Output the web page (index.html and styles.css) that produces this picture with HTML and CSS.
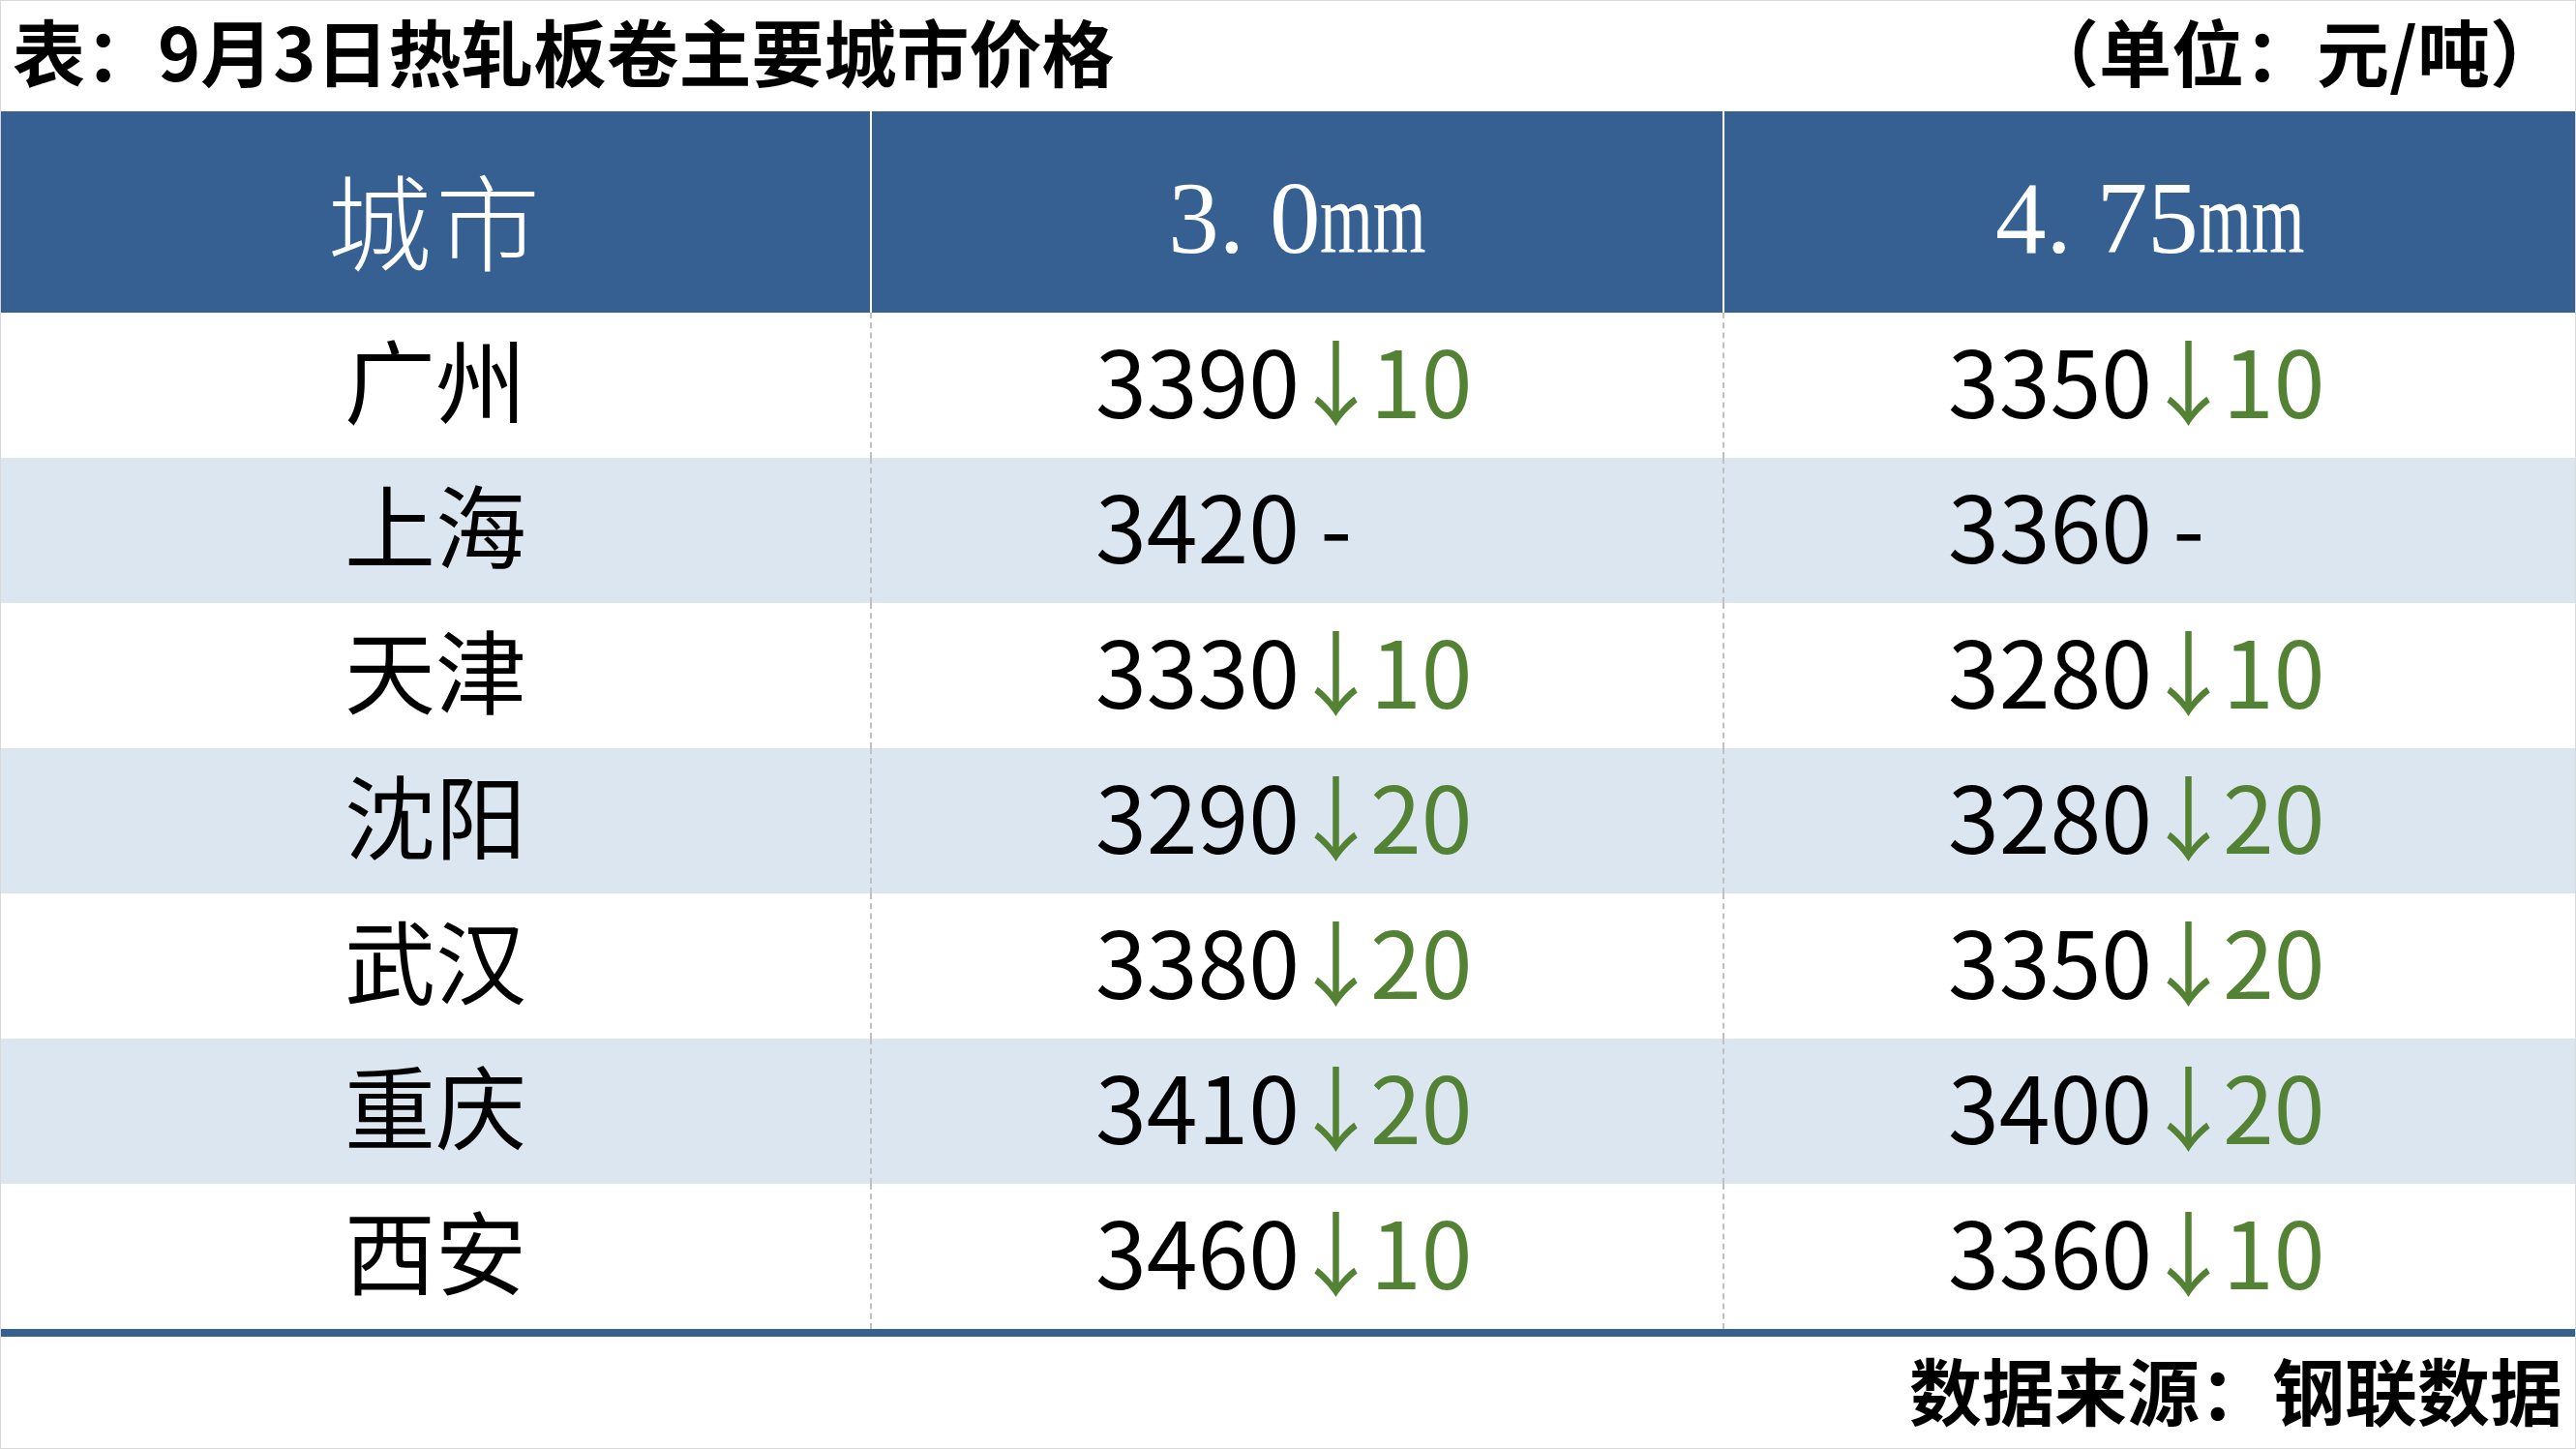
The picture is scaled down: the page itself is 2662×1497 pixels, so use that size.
FILE: index.html
```html
<!DOCTYPE html>
<html lang="zh-CN">
<head>
<meta charset="utf-8">
<title>9月3日热轧板卷主要城市价格</title>
<link rel="stylesheet" href="styles.css">
</head>
<body>
<div class="page">
  <div class="topbar">
    <div class="title">表：9月3日热轧板卷主要城市价格</div>
    <div class="unit">（单位：元/吨）</div>
  </div>
  <div class="table">
    <div class="row head">
      <div class="cell c1"><span class="hcity">城市</span></div>
      <div class="cell c2"><span class="hsize">3<span class="dot">.</span>0<span class="mm">mm</span></span></div>
      <div class="cell c3"><span class="hsize">4<span class="dot">.</span>75<span class="mm">mm</span></span></div>
    </div>
    <div class="row">
      <div class="cell c1 city">广州</div>
      <div class="cell c2 num">3390<span class="arrow">↓</span><span class="chg">10</span></div>
      <div class="cell c3 num">3350<span class="arrow">↓</span><span class="chg">10</span></div>
    </div>
    <div class="row alt">
      <div class="cell c1 city">上海</div>
      <div class="cell c2 num">3420 -</div>
      <div class="cell c3 num">3360 -</div>
    </div>
    <div class="row">
      <div class="cell c1 city">天津</div>
      <div class="cell c2 num">3330<span class="arrow">↓</span><span class="chg">10</span></div>
      <div class="cell c3 num">3280<span class="arrow">↓</span><span class="chg">10</span></div>
    </div>
    <div class="row alt">
      <div class="cell c1 city">沈阳</div>
      <div class="cell c2 num">3290<span class="arrow">↓</span><span class="chg">20</span></div>
      <div class="cell c3 num">3280<span class="arrow">↓</span><span class="chg">20</span></div>
    </div>
    <div class="row">
      <div class="cell c1 city">武汉</div>
      <div class="cell c2 num">3380<span class="arrow">↓</span><span class="chg">20</span></div>
      <div class="cell c3 num">3350<span class="arrow">↓</span><span class="chg">20</span></div>
    </div>
    <div class="row alt">
      <div class="cell c1 city">重庆</div>
      <div class="cell c2 num">3410<span class="arrow">↓</span><span class="chg">20</span></div>
      <div class="cell c3 num">3400<span class="arrow">↓</span><span class="chg">20</span></div>
    </div>
    <div class="row last">
      <div class="cell c1 city">西安</div>
      <div class="cell c2 num">3460<span class="arrow">↓</span><span class="chg">10</span></div>
      <div class="cell c3 num">3360<span class="arrow">↓</span><span class="chg">10</span></div>
    </div>
  </div>
  <div class="footer">数据来源：钢联数据</div>
</div>
</body>
</html>
```
FILE: styles.css
```css
html, body {
  margin: 0;
  padding: 0;
  background: #ffffff;
}

.page {
  width: 2662px;
  height: 1497px;
  box-sizing: border-box;
  border: 1px solid #d9d9d9;
  display: flex;
  flex-direction: column;
  font-family: "Noto Sans CJK SC", "Noto Sans", sans-serif;
  color: #000;
  overflow: hidden;
}

.topbar {
  height: 114px;
  box-sizing: border-box;
  display: flex;
  align-items: center;
  justify-content: space-between;
  padding: 0 13px 12px 12px;
  font-size: 75px;
  font-weight: 700;
  line-height: 1.3;
}

.title, .unit {
  white-space: nowrap;
}

.unit {
  padding-left: 12px;
}

.table {
  display: flex;
  flex-direction: column;
}

.row {
  display: grid;
  grid-template-columns: 898px 881px 881px;
  height: 150px;
  background: #ffffff;
}

.row.alt {
  background: #dce6f1;
}

.row.head {
  height: 208px;
  background: #376092;
  color: #ffffff;
}

.row.last {
  height: 150px;
  border-bottom: 8px solid #376092;
}

.cell {
  box-sizing: border-box;
  display: flex;
  align-items: center;
  white-space: nowrap;
  padding-bottom: 14px;
}

.c2, .c3 {
  border-left: 2px dashed #c0c0c0;
}

.head .cell {
  justify-content: center;
  padding-top: 14px;
  padding-bottom: 0;
}

.head .c2, .head .c3 {
  border-left: 2px solid #ffffff;
}

.hcity {
  font-family: "Noto Sans CJK SC", sans-serif;
  font-weight: 300;
  font-size: 108px;
  line-height: 1.2;
  letter-spacing: 4px;
}

.hsize {
  font-family: "Liberation Serif", serif;
  font-size: 105px;
  line-height: 1.2;
}

.dot {
  margin-right: 26px;
}

.mm {
  display: inline-block;
  transform: scaleX(0.67);
  transform-origin: left center;
  margin-right: -54px;
}

.city {
  justify-content: center;
  font-size: 94px;
  line-height: 1.1;
}

.num {
  font-size: 95px;
  line-height: 1.1;
  padding-left: 231px;
}

.arrow {
  font-family: "Noto Sans CJK SC", sans-serif;
  color: #548235;
  font-size: 95px;
  margin: 0 -12px 0 -10px;
}

.chg {
  color: #548235;
}

.footer {
  flex: 1;
  display: flex;
  align-items: center;
  justify-content: flex-end;
  padding-right: 13px;
  padding-bottom: 8px;
  font-size: 75px;
  font-weight: 700;
  line-height: 1.3;
  white-space: nowrap;
}
```
